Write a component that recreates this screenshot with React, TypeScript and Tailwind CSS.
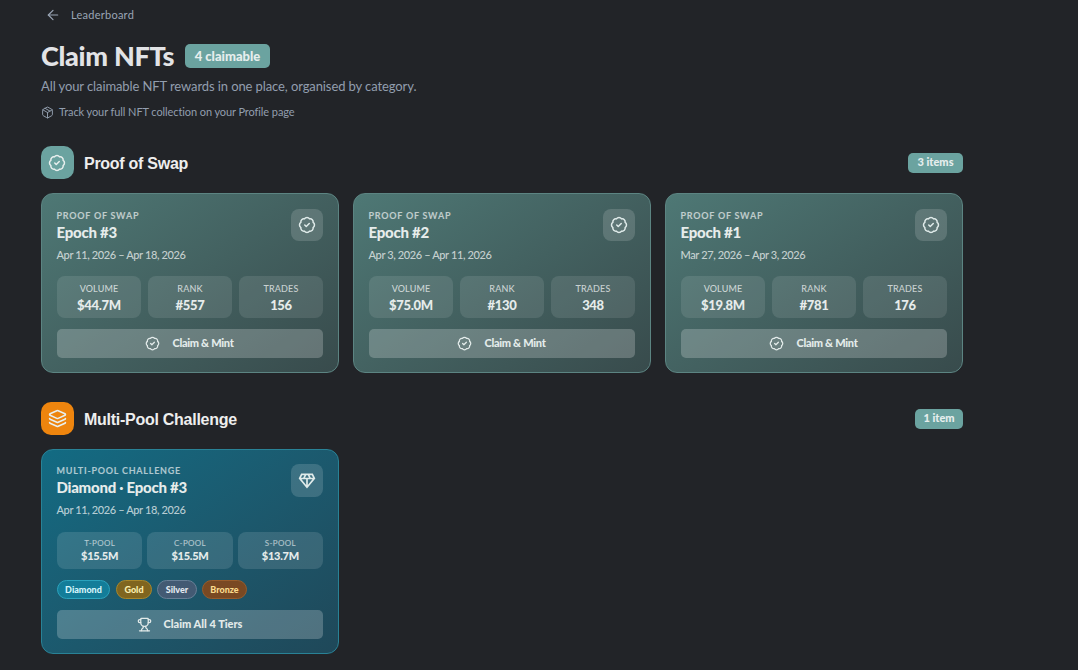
import type { ReactNode } from "react";
import { ArrowLeft, BadgeCheck, Layers, Package, Trophy } from "lucide-react";
import { MdOutlineDiamond } from "react-icons/md";
import { clsx } from "clsx";

const epochs = [
  {
    title: "Epoch #3",
    dates: "Apr 11, 2026 – Apr 18, 2026",
    stats: [
      { label: "VOLUME", value: "$44.7M" },
      { label: "RANK", value: "#557" },
      { label: "TRADES", value: "156" },
    ],
  },
  {
    title: "Epoch #2",
    dates: "Apr 3, 2026 – Apr 11, 2026",
    stats: [
      { label: "VOLUME", value: "$75.0M" },
      { label: "RANK", value: "#130" },
      { label: "TRADES", value: "348" },
    ],
  },
  {
    title: "Epoch #1",
    dates: "Mar 27, 2026 – Apr 3, 2026",
    stats: [
      { label: "VOLUME", value: "$19.8M" },
      { label: "RANK", value: "#781" },
      { label: "TRADES", value: "176" },
    ],
  },
];

const pools = [
  { label: "T-POOL", value: "$15.5M" },
  { label: "C-POOL", value: "$15.5M" },
  { label: "S-POOL", value: "$13.7M" },
];

const tiers = [
  { name: "Diamond", className: "w-[53px] mr-1.5 bg-[#137d99] border-[#2ba3bd] text-[#d5f5fb]" },
  { name: "Gold", className: "w-9 mr-[5px] bg-[#80651f] border-[#a8872b] text-[#fbeeb0]" },
  { name: "Silver", className: "w-10 mr-[5px] bg-[#435a73] border-[#687f96] text-[#e3e9f0]" },
  { name: "Bronze", className: "w-[45px] bg-[#794923] border-[#985c2b] text-[#fbdc8e]" },
];

function SectionHeader({
  icon,
  title,
  count,
  className,
  countClassName,
}: {
  icon: ReactNode;
  title: string;
  count: string;
  className: string;
  countClassName: string;
}) {
  return (
    <div className="flex h-[33px] items-center">
      <div
        className={clsx(
          "flex size-[33px] items-center justify-center rounded-[10px] pr-px text-[#e8efee]",
          className,
        )}
      >
        {icon}
      </div>
      <h2 className="ml-2.5 pt-0.5 font-['Liberation_Sans',sans-serif] text-base font-bold tracking-[-0.27px] text-[#eeeeee]">
        {title}
      </h2>
      <span
        className={clsx(
          "ml-auto flex h-5 items-center justify-center rounded-[5px] bg-[#6ba3a0] pb-px text-[11px] font-black text-[#e6eeed]",
          countClassName,
        )}
      >
        {count}
      </span>
    </div>
  );
}

function CardHeader({
  label,
  title,
  dates,
  icon,
  iconClassName,
}: {
  label: string;
  title: string;
  dates: string;
  icon: ReactNode;
  iconClassName: string;
}) {
  return (
    <div className="flex items-start justify-between">
      <div className="-ml-px pl-[0.5px]">
        <p className="h-[13px] text-[9px] leading-[14px] font-bold tracking-[0.75px] text-white/65">
          {label}
        </p>
        <h3 className="h-[21px] text-[15px] leading-[21px] font-black tracking-[-0.25px] text-[#e6eceb]">
          {title}
        </h3>
        <p className="mt-1 h-4 text-[11px] leading-4 font-medium tracking-[-0.38px] text-white/70">
          {dates}
        </p>
      </div>
      <div
        className={clsx(
          "flex w-8 items-center justify-center rounded-lg bg-white/15 text-[#e0ebea]",
          iconClassName,
        )}
      >
        {icon}
      </div>
    </div>
  );
}

function ClaimButton({
  icon,
  className,
  children,
}: {
  icon: ReactNode;
  className?: string;
  children: ReactNode;
}) {
  return (
    <button
      className={clsx(
        "flex h-[29px] w-full items-center justify-center gap-3 rounded-[5px] bg-white/22 pr-px text-[11px] font-black text-[#e3ebea]",
        className,
      )}
    >
      {icon}
      {children}
    </button>
  );
}

export default function App() {
  return (
    <div className="h-[670px] overflow-hidden bg-[#222428] pl-[41px] font-[Lato,sans-serif]">
      <main className="flex w-[922px] flex-col">
        <a className="flex h-[30px] items-center pl-1 text-[11px] tracking-[0.25px] text-[#9aa5b5]">
          <ArrowLeft className="size-4" strokeWidth={1.8} />
          <span className="ml-2.5">Leaderboard</span>
        </a>

        <div className="mt-2.5 flex h-8 items-center">
          <h1 className="w-[144px] text-[27px] font-black tracking-[-0.3px] whitespace-nowrap text-[#e2e3e6]">
            Claim NFTs
          </h1>
          <span className="flex h-6 w-[85px] items-center justify-center rounded-[5px] bg-[#6ba3a0] pt-px text-[13px] font-black text-[#e6eeed]">
            4 claimable
          </span>
        </div>
        <p className="mt-1 h-5 text-[13px] leading-5 tracking-[-0.1px] text-[#929eae]">
          All your claimable NFT rewards in one place, organised by category.
        </p>
        <p className="mt-[7px] flex h-[18px] items-center text-[11px] tracking-[-0.09px] text-[#929eae]">
          <Package className="mr-[5px] size-[13px]" strokeWidth={1.8} />
          Track your full NFT collection on your Profile page
        </p>

        <section className="mt-[25px]">
          <SectionHeader
            icon={<BadgeCheck className="size-[18px]" />}
            title="Proof of Swap"
            count="3 items"
            className="bg-[#6ba3a0]"
            countClassName="w-[55px]"
          />
          <div className="mt-3.5 grid grid-cols-3 gap-3.5">
            {epochs.map((epoch) => (
              <article
                key={epoch.title}
                className="h-[180px] rounded-xl border border-[#5c8482] bg-linear-145 from-[#4e7875] to-[#384b4c] p-[15px]"
              >
                <CardHeader
                  label="PROOF OF SWAP"
                  title={epoch.title}
                  dates={epoch.dates}
                  icon={<BadgeCheck className="size-[18px]" />}
                  iconClassName="h-8"
                />
                <div className="mt-[13px] mb-[11px] grid grid-cols-3 gap-[7px]">
                  {epoch.stats.map((stat) => (
                    <div
                      key={stat.label}
                      className="flex h-[42px] flex-col items-center rounded-lg bg-white/10 pt-1.5"
                    >
                      <span className="text-[9px] leading-[14px] font-medium tracking-[0.15px] text-white/70">
                        {stat.label}
                      </span>
                      <span className="text-[13px] leading-[18px] font-black tracking-[-0.3px] text-[#e6eceb]">
                        {stat.value}
                      </span>
                    </div>
                  ))}
                </div>
                <ClaimButton
                  icon={<BadgeCheck className="size-[15px]" />}
                  className="tracking-[-0.3px]"
                >
                  Claim &amp; Mint
                </ClaimButton>
              </article>
            ))}
          </div>
        </section>

        <section className="mt-[29px]">
          <SectionHeader
            icon={<Layers className="size-[19px]" />}
            title="Multi-Pool Challenge"
            count="1 item"
            className="bg-[#ee850e]"
            countClassName="w-12"
          />
          <div className="mt-3.5 grid grid-cols-3 gap-3.5">
            <article className="h-[205px] rounded-xl border border-[#298296] bg-linear-145 from-[#126b83] to-[#1f4859] px-[15px] py-3.5">
              <CardHeader
                label="MULTI-POOL CHALLENGE"
                title="Diamond · Epoch #3"
                dates="Apr 11, 2026 – Apr 18, 2026"
                icon={<MdOutlineDiamond className="size-5" />}
                iconClassName="h-[33px] pt-px"
              />
              <div className="mt-3.5 grid grid-cols-3 gap-[5px]">
                {pools.map((pool) => (
                  <div
                    key={pool.label}
                    className="flex h-[37px] flex-col items-center rounded-lg bg-white/12 pt-[5px]"
                  >
                    <span className="text-[8px] leading-3 tracking-[0.35px] text-white/65">
                      {pool.label}
                    </span>
                    <span className="text-[11px] leading-[14px] font-black tracking-[-0.25px] text-[#e6eceb]">
                      {pool.value}
                    </span>
                  </div>
                ))}
              </div>
              <div className="mt-[11px] mb-[11px] flex">
                {tiers.map((tier) => (
                  <span
                    key={tier.name}
                    className={clsx(
                      "flex h-[19px] items-center justify-center rounded-full border text-[9px] font-black",
                      tier.className,
                    )}
                  >
                    {tier.name}
                  </span>
                ))}
              </div>
              <ClaimButton icon={<Trophy className="size-[15px]" />}>Claim All 4 Tiers</ClaimButton>
            </article>
          </div>
        </section>
      </main>
    </div>
  );
}
